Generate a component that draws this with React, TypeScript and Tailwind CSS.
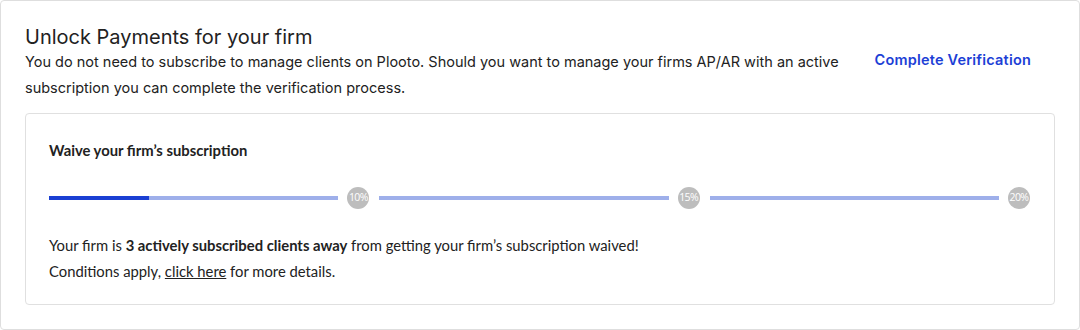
import React from 'react';

const milestones = [
  { label: '10%', fill: 34.5 },
  { label: '15%', fill: 0 },
  { label: '20%', fill: 0 },
];

export default function App() {
  return (
    <div className="w-[1080px] h-[330px] bg-white font-['Inter',sans-serif] text-[#1f1f1f]">
      <div className="h-full rounded-[4px] border border-[#dedede] px-6 pt-[24px]">
        <div className="flex items-start justify-between">
          <div>
            <h1 className="text-[20px] leading-[24px] text-[#222]">Unlock Payments for your firm</h1>
            <p className="w-[830px] text-[14.5px] leading-[26px] text-[#222]">
              You do not need to subscribe to manage clients on Plooto. Should you want to manage your firms AP/AR with an active
              subscription you can complete the verification process.
            </p>
          </div>
          <a className="mr-[24px] mt-[24px] text-[14.5px] font-semibold tracking-[0.2px] text-[#1d3fd6]">Complete Verification</a>
        </div>

        {/* Subscription waiver card */}
        <div className="mt-[12px] h-[192px] rounded-[4px] border border-[#e0e0e0] pl-[23px] pr-6 pt-[27px] font-['Lato',sans-serif]">
          <h2 className="text-[14.8px] font-bold leading-[18px] text-[#222]">Waive your firm’s subscription</h2>
          <div className="mt-[28px] flex gap-[10px]">
            {milestones.map((m) => (
              <div key={m.label} className="flex flex-1 items-center gap-[9px]">
                <div className="relative h-[4px] flex-1 bg-[#9eafea]">
                  <div className="h-full bg-[#1a3fd3]" style={{ width: `${m.fill}%` }} />
                </div>
                <div className="flex h-[22px] w-[22px] items-center justify-center rounded-full bg-[#bdbdbd] font-['Open_Sans',sans-serif] text-[10.5px] tracking-[-0.6px] text-white">
                  {m.label}
                </div>
              </div>
            ))}
          </div>
          <p className="mt-[23px] text-[14.8px] leading-[26px] text-[#222]">
            Your firm is <span className="font-bold">3 actively subscribed clients away</span> from getting your firm’s subscription waived!
          </p>
          <p className="text-[14.8px] leading-[26px] text-[#222]">
            Conditions apply, <a className="underline">click here</a> for more details.
          </p>
        </div>
      </div>
    </div>
  );
}
